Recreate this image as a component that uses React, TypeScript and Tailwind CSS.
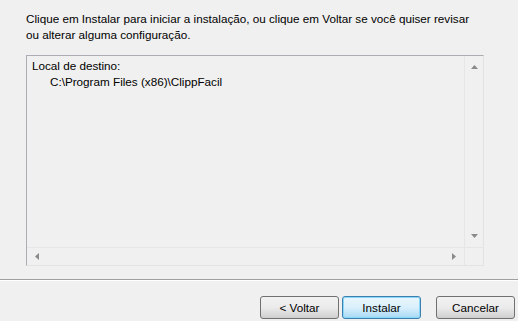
export default function App() {
  return (
    <div
      className="w-[518px] h-[321px] bg-[#f0f0f0] text-[11.7px] leading-[16px] text-black overflow-hidden flex flex-col"
      style={{ fontFamily: '"Liberation Sans", Arial, sans-serif' }}
    >
      {/* Message */}
      <div className="pl-[26px] pr-2 pt-[11px]">
        <p>Clique em Instalar para iniciar a instalação, ou clique em Voltar se você quiser revisar</p>
        <p>ou alterar alguma configuração.</p>
      </div>

      {/* Summary box */}
      <div className="ml-[26px] mt-[12px] w-[458px] h-[211px] border border-[#abadb3] border-r-[#e3e3e3] border-b-[#e3e3e3] flex flex-col">
        <div className="flex flex-1 min-h-0">
          <div className="flex-1 pl-[5px] pt-[2px]">
            <p>Local de destino:</p>
            <p className="pl-[18px]">C:\Program Files (x86)\ClippFacil</p>
          </div>
          {/* vertical scrollbar */}
          <div className="w-[19px] border-l border-[#e6e6e6] bg-[#f0f0f0] flex flex-col items-center justify-between py-[9px]">
            <svg width="7" height="4" viewBox="0 0 7 4">
              <path d="M3.5 0 L7 4 L0 4 Z" fill="#8a8a8a" />
            </svg>
            <svg width="7" height="4" viewBox="0 0 7 4">
              <path d="M0 0 L7 0 L3.5 4 Z" fill="#8a8a8a" />
            </svg>
          </div>
        </div>
        {/* horizontal scrollbar */}
        <div className="h-[18px] flex border-t border-[#e6e6e6]">
          <div className="flex-1 flex items-center justify-between px-[8px] bg-[#f0f0f0]">
            <svg width="4" height="7" viewBox="0 0 4 7">
              <path d="M0 3.5 L4 0 L4 7 Z" fill="#8a8a8a" />
            </svg>
            <svg width="4" height="7" viewBox="0 0 4 7">
              <path d="M0 0 L4 3.5 L0 7 Z" fill="#8a8a8a" />
            </svg>
          </div>
          <div className="w-[19px] border-l border-[#e6e6e6]" />
        </div>
      </div>

      {/* Separator */}
      <div className="mt-[13px] border-t border-[#a0a0a0] border-b border-b-white" />

      {/* Buttons */}
      <div className="flex justify-end pr-[3px] pt-[15px]">
        <button className="w-[79px] h-[23px] rounded-[3px] border border-[#707070] bg-gradient-to-b from-[#f2f2f2] via-[#ebebeb] to-[#cfcfcf]">
          &lt; Voltar
        </button>
        <button className="ml-[3px] w-[79px] h-[23px] rounded-[3px] border border-[#3c7fb1] bg-gradient-to-b from-[#eaf6fd] via-[#d9f0fc] to-[#a7d9f5] shadow-[inset_0_0_0_1px_#8ad8f7]">
          Instalar
        </button>
        <button className="ml-[15px] w-[79px] h-[23px] rounded-[3px] border border-[#707070] bg-gradient-to-b from-[#f2f2f2] via-[#ebebeb] to-[#cfcfcf]">
          Cancelar
        </button>
      </div>
    </div>
  );
}
